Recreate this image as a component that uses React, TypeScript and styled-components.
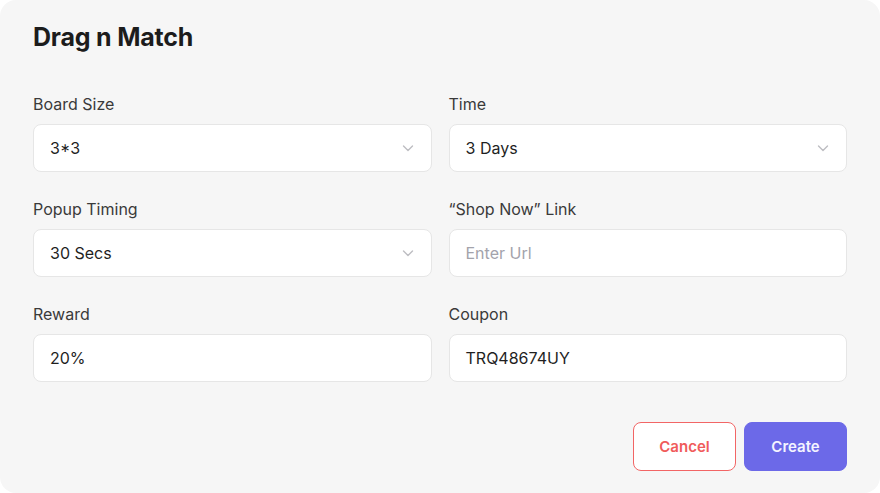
import styled, { createGlobalStyle } from "styled-components";

const GlobalStyle = createGlobalStyle`
  body {
    margin: 0;
    background: #ffffff;
    font-family: Inter, "Noto Sans", sans-serif;
  }
`;

const Card = styled.div`
  width: 880px;
  height: 493px;
  box-sizing: border-box;
  background: #f6f6f6;
  border-radius: 16px;
  padding: 20px 33px 22px 33px;
  display: flex;
  flex-direction: column;
`;

const Title = styled.h1`
  margin: 0;
  font-size: 25px;
  font-weight: 700;
  color: #1c1c1c;
  line-height: 34px;
  letter-spacing: -0.2px;
`;

const FormGrid = styled.div`
  margin-top: 40px;
  display: grid;
  grid-template-columns: 1fr 1fr;
  column-gap: 17px;
  row-gap: 27px;
`;

const Field = styled.div`
  display: flex;
  flex-direction: column;
  gap: 10px;
`;

const Label = styled.label`
  font-size: 16px;
  line-height: 20px;
  color: #3a3a3a;
`;

const InputBox = styled.div`
  height: 48px;
  box-sizing: border-box;
  background: #ffffff;
  border: 1px solid #e6e6e6;
  border-radius: 8px;
  padding: 0 16px;
  display: flex;
  align-items: center;
  justify-content: space-between;
`;

const Value = styled.span<{ $placeholder?: boolean }>`
  font-size: 16px;
  color: ${(p) => (p.$placeholder ? "#a3a3ab" : "#1f1f1f")};
`;

const Footer = styled.div`
  margin-top: auto;
  display: flex;
  justify-content: flex-end;
  gap: 8px;
`;

const Button = styled.button<{ $primary?: boolean }>`
  width: 103px;
  height: 49px;
  border-radius: 8px;
  font-family: Inter, "Noto Sans", sans-serif;
  font-size: 15px;
  font-weight: 600;
  cursor: pointer;
  border: 1px solid ${(p) => (p.$primary ? "#6c69e8" : "#f26565")};
  background: ${(p) => (p.$primary ? "#6c69e8" : "#ffffff")};
  color: ${(p) => (p.$primary ? "#f4f4ff" : "#f05b5b")};
`;

const Chevron = () => (
  <svg width="14" height="14" viewBox="0 0 14 14" fill="none">
    <path
      d="M2.5 5l4.5 4.5L11.5 5"
      stroke="#bdbdc2"
      strokeWidth="1.4"
      strokeLinecap="round"
      strokeLinejoin="round"
    />
  </svg>
);

type FieldDef = {
  label: string;
  value: string;
  select?: boolean;
  placeholder?: boolean;
};

const fields: FieldDef[] = [
  { label: "Board Size", value: "3*3", select: true },
  { label: "Time", value: "3 Days", select: true },
  { label: "Popup Timing", value: "30 Secs", select: true },
  { label: "\u201CShop Now\u201D Link", value: "Enter Url", placeholder: true },
  { label: "Reward", value: "20%" },
  { label: "Coupon", value: "TRQ48674UY" },
];

export default function App() {
  return (
    <>
      <GlobalStyle />
      <Card>
        <Title>Drag n Match</Title>
        <FormGrid>
          {fields.map((f) => (
            <Field key={f.label}>
              <Label>{f.label}</Label>
              <InputBox>
                <Value $placeholder={f.placeholder}>{f.value}</Value>
                {f.select && <Chevron />}
              </InputBox>
            </Field>
          ))}
        </FormGrid>
        <Footer>
          <Button>Cancel</Button>
          <Button $primary>Create</Button>
        </Footer>
      </Card>
    </>
  );
}
